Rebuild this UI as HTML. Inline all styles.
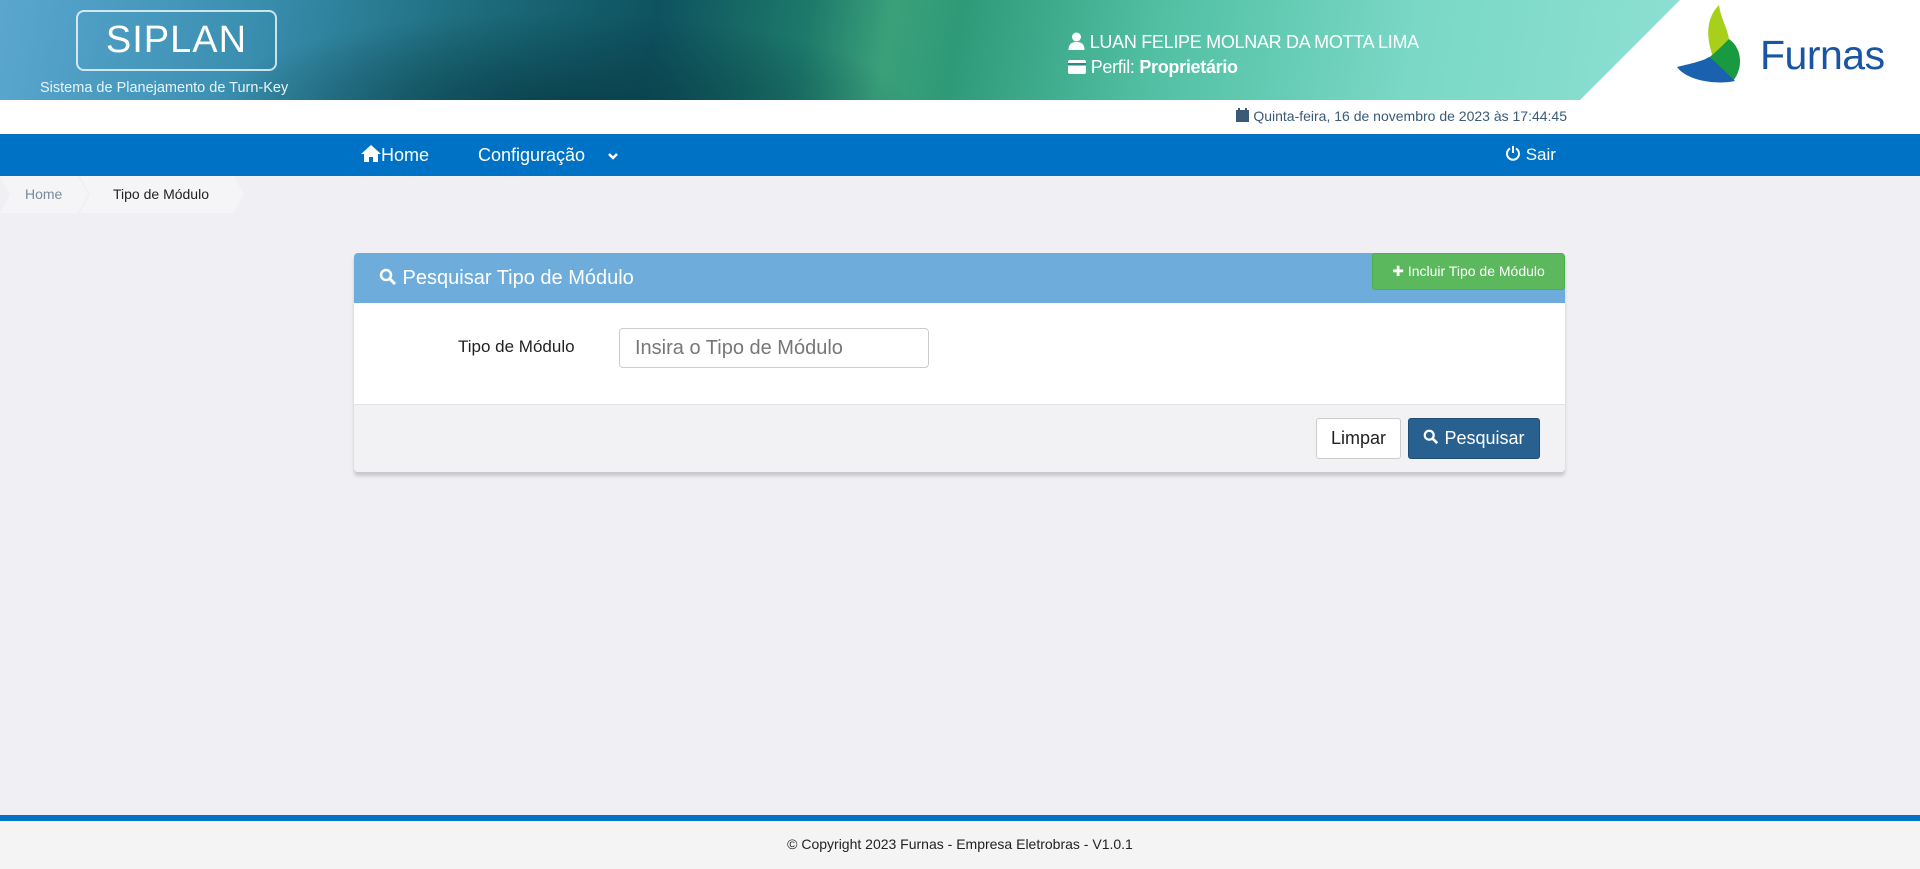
<!DOCTYPE html>
<html><head><meta charset="utf-8"><style>
*{margin:0;padding:0;box-sizing:border-box}
body{width:1920px;height:869px;background:#efeff4;font-family:"Liberation Sans",sans-serif;position:relative;overflow:hidden}
.hdr{position:absolute;left:0;top:0;width:1920px;height:134px;background:#fff;overflow:hidden}
.grad{position:absolute;left:0;top:0;width:1680px;height:100px;clip-path:polygon(0 0,1680px 0,1580px 100px,0 100px);
background:
radial-gradient(ellipse 500px 140px at 560px 110px,rgba(8,60,70,.85),rgba(8,60,70,0) 70%),
linear-gradient(100deg,#5aa6d0 0px,#3a8fb0 250px,#1f6f80 450px,#0e525f 650px,#1d7a6a 800px,#3aa07a 880px,#2f9a78 950px,#52c0a4 1150px,#7ad8c6 1400px,#8ee0d2 1680px)}
.siplan{position:absolute;left:76px;top:10px;width:201px;height:61px;border:2px solid rgba(255,255,255,.75);border-radius:8px;color:#fff;font-size:38px;text-align:center;line-height:56px;letter-spacing:1px}
.sub{position:absolute;left:40px;top:80px;color:#e8f4f6;font-size:14.5px}
.user{position:absolute;left:1068px;top:30px;color:#fff;font-size:18px;line-height:25px;letter-spacing:-0.3px}
.date{position:absolute;right:353px;top:108px;color:#3a5a78;font-size:14px}
.nav{position:absolute;left:0;top:134px;width:1920px;height:42px;background:#0072c6;color:#fff;font-size:18px}
.nav span{position:absolute;top:11px}
.bc{position:absolute;left:0;top:176px;height:37px;font-size:14px}
.bc div{position:absolute;top:0;height:37px;line-height:37px;background:#f5f5f7;clip-path:polygon(0 0,calc(100% - 10px) 0,100% 50%,calc(100% - 10px) 100%,0 100%,10px 50%)}
.panel{position:absolute;left:354px;top:253px;width:1211px;height:219px;background:#fff;border-radius:4px;box-shadow:0 4px 3px #c8c8cc;overflow:hidden}
.ph{height:50px;background:#6eacdb;color:#fff;font-size:20px;line-height:50px;padding-left:25px}
.green{position:absolute;right:0;top:0;width:193px;height:37px;background:#5cb85c;border:1px solid #4cae4c;border-radius:3px;color:#fff;font-size:14px;line-height:35px;text-align:center}
.pb{height:102px;border-bottom:1px solid #e3e3e6;position:relative}
.lbl{position:absolute;left:104px;font-size:17px;color:#222}
.inp{position:absolute;left:265px;width:310px;height:40px;border:1px solid #ccc;border-radius:4px;font-size:20px;color:#777;line-height:38px;padding-left:15px}
.pf{height:67px;background:#f2f2f4;position:relative}
.btn{position:absolute;top:13px;height:41px;border-radius:3px;font-size:18px;line-height:39px;text-align:center}
.foot{position:absolute;left:0;top:815px;width:1920px;height:54px;border-top:6px solid #0072c6;background:#f4f4f4;text-align:center;font-size:14px;color:#222;line-height:46px}
</style></head><body>
<div class="hdr">
<div class="grad"></div>
<div class="siplan">SIPLAN</div>
<div class="sub">Sistema de Planejamento de Turn-Key</div>
<div class="user">
<div><svg width="17" height="18" viewBox="0 0 16 18" style="vertical-align:-2px"><circle cx="8" cy="5" r="4.5" fill="#fff"/><path d="M0 18c0-6 3-8 8-8s8 2 8 8z" fill="#fff"/></svg> LUAN FELIPE MOLNAR DA MOTTA LIMA</div>
<div><svg width="18" height="14" viewBox="0 0 18 14" style="vertical-align:-1px"><rect x="0" y="0" width="18" height="14" rx="2" fill="#fff"/><rect x="0" y="3" width="18" height="2.5" fill="#2a8a8a"/></svg> Perfil: <b>Proprietário</b></div>
</div>
<svg style="position:absolute;left:1677px;top:5px" width="70" height="80" viewBox="0 0 70 80">
<path d="M42 0C30 12 28 30 36 52C42 46 48 40 52 34C50 22 44 14 42 0z" fill="#a8cf1a"/>
<path d="M52 34C44 42 38 48 30 54C40 62 52 74 56 76C66 64 66 44 52 34z" fill="#1a9a40"/>
<path d="M0 62C16 58 26 56 32 52C40 58 50 68 58 76C40 80 10 76 0 62z" fill="#1a62b0"/>
</svg>
<div style="position:absolute;left:1760px;top:32px;font-size:41px;color:#1a55a3;letter-spacing:-0.5px">Furnas</div>
</div>
<div class="date"><svg width="13" height="14" viewBox="0 0 13 14" style="vertical-align:-1px"><rect y="2" width="13" height="12" fill="#3a5a78"/><rect x="2" y="0" width="2" height="3" fill="#3a5a78"/><rect x="9" y="0" width="2" height="3" fill="#3a5a78"/></svg> Quinta-feira, 16 de novembro de 2023 às 17:44:45</div>
<div class="nav">
<span style="left:361px"><svg width="20" height="17" viewBox="0 0 20 17" style="vertical-align:-1px"><path d="M10 0L0 9h3v8h5v-5h4v5h5V9h3z" fill="#fff"/></svg>Home</span>
<span style="left:478px">Configuração</span>
<span style="left:607px;top:12px"><svg width="12" height="12" viewBox="0 0 12 12"><path d="M2 4l4 4 4-4" stroke="#fff" stroke-width="2.5" fill="none"/></svg></span>
<span style="left:1505px;font-size:17px"><svg width="16" height="16" viewBox="0 0 16 16" style="vertical-align:-1px"><path d="M5 3.5A6 6 0 1 0 11 3.5" stroke="#fff" stroke-width="2" fill="none"/><path d="M8 1v7" stroke="#fff" stroke-width="2"/></svg> Sair</span>
</div>
<div class="bc">
<div style="left:0;width:88px;padding-left:25px;color:#7a8a9a">Home</div>
<div style="left:80px;width:164px;padding-left:33px;color:#222">Tipo de Módulo</div>
</div>
<div class="panel">
<div class="ph"><svg width="18" height="18" viewBox="0 0 18 18" style="vertical-align:-2px"><circle cx="7" cy="7" r="5" stroke="#fff" stroke-width="2.5" fill="none"/><path d="M11 11l5 5" stroke="#fff" stroke-width="3"/></svg> Pesquisar Tipo de Módulo</div>
<div class="green">✚ Incluir Tipo de Módulo</div>
<div class="pb"><div class="lbl" style="top:34px">Tipo de Módulo</div><div class="inp" style="top:25px">Insira o Tipo de Módulo</div></div>
<div class="pf">
<div class="btn" style="left:962px;width:85px;background:#fff;border:1px solid #ccc;color:#222">Limpar</div>
<div class="btn" style="left:1054px;width:132px;background:#286090;border:1px solid #204d74;color:#fff"><svg width="16" height="16" viewBox="0 0 18 18" style="vertical-align:-1px"><circle cx="7" cy="7" r="5" stroke="#fff" stroke-width="2.5" fill="none"/><path d="M11 11l5 5" stroke="#fff" stroke-width="3"/></svg> Pesquisar</div>
</div>
</div>
<div class="foot">© Copyright 2023 Furnas - Empresa Eletrobras - V1.0.1</div>
</body></html>
